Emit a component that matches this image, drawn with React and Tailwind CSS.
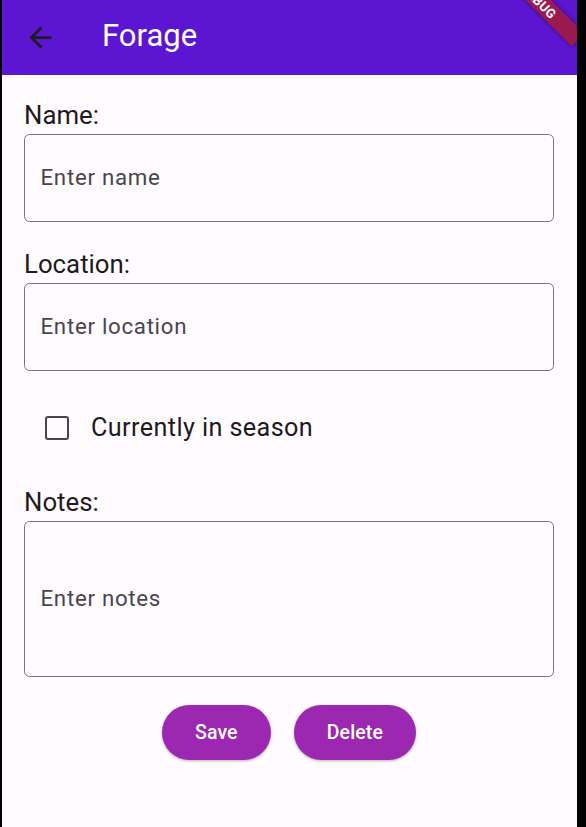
import React from 'react';

const Field = ({ label, placeholder, tall }) => (
  <div className="flex flex-col">
    <div className="text-[25.8px] leading-[37px] text-[#1d1b20]">{label}</div>
    <div
      className={
        'flex items-center border-[1.5px] border-[#79747e] rounded-[5.5px] pl-[15.5px] ' +
        (tall ? 'h-[156px]' : 'h-[88px]')
      }
    >
      <span className="text-[22.3px] tracking-[0.7px] text-[#49454f]">{placeholder}</span>
    </div>
  </div>
);

const App = () => {
  return (
    <div className="flex h-[827px] w-[586px] bg-black font-['Roboto',sans-serif]">
      <div className="relative ml-[2px] w-[575px] h-full overflow-hidden bg-[#fffbfe]">
        {/* app bar */}
        <div className="flex h-[75px] items-center bg-[#5c15d0]">
          <div className="ml-[21.5px] flex h-[33px] w-[33px] items-center justify-center">
            <svg viewBox="0 0 24 24" className="h-[33px] w-[33px]" fill="#1d1b20">
              <path d="M20 11H7.83l5.59-5.59L12 4l-8 8 8 8 1.41-1.41L7.83 13H20v-2z" />
            </svg>
          </div>
          <div className="ml-[45.5px] pb-[3px] text-[31px] text-white">Forage</div>
        </div>

        {/* form */}
        <div className="flex flex-col pl-[22px] pr-[23px] pt-[22px]">
          <Field label="Name:" placeholder="Enter name" />
          <div className="mt-[24px]">
            <Field label="Location:" placeholder="Enter location" />
          </div>

          <div className="my-[24px] flex h-[65px] items-center pl-[21px]">
            <div className="h-[24px] w-[24px] rounded-[3px] border-[2.75px] border-[#49454f]" />
            <span className="ml-[22px] text-[25.2px] tracking-[0.4px] text-[#1d1b20]">Currently in season</span>
          </div>

          <Field label="Notes:" placeholder="Enter notes" tall />

          <div className="mt-[28px] flex justify-center gap-[23px]">
            <button className="h-[55px] rounded-full bg-[#9c27b0] px-[33px] text-[19.5px] font-medium tracking-[0.14px] text-white shadow-[0_1px_3px_rgba(0,0,0,0.3)]">
              Save
            </button>
            <button className="h-[55px] rounded-full bg-[#9c27b0] px-[33px] text-[19.5px] font-medium tracking-[0.14px] text-white shadow-[0_1px_3px_rgba(0,0,0,0.3)]">
              Delete
            </button>
          </div>
        </div>

        {/* debug banner */}
        <div className="absolute left-[482px] top-[-8px] flex h-[18px] w-[110px] rotate-45 items-center justify-center bg-[#9a1a50] shadow-[0_0_4px_rgba(0,0,0,0.5)]">
          <span className="text-[13px] font-bold leading-none tracking-[0.3px] text-white">DEBUG</span>
        </div>
      </div>
    </div>
  );
};

export default App;
